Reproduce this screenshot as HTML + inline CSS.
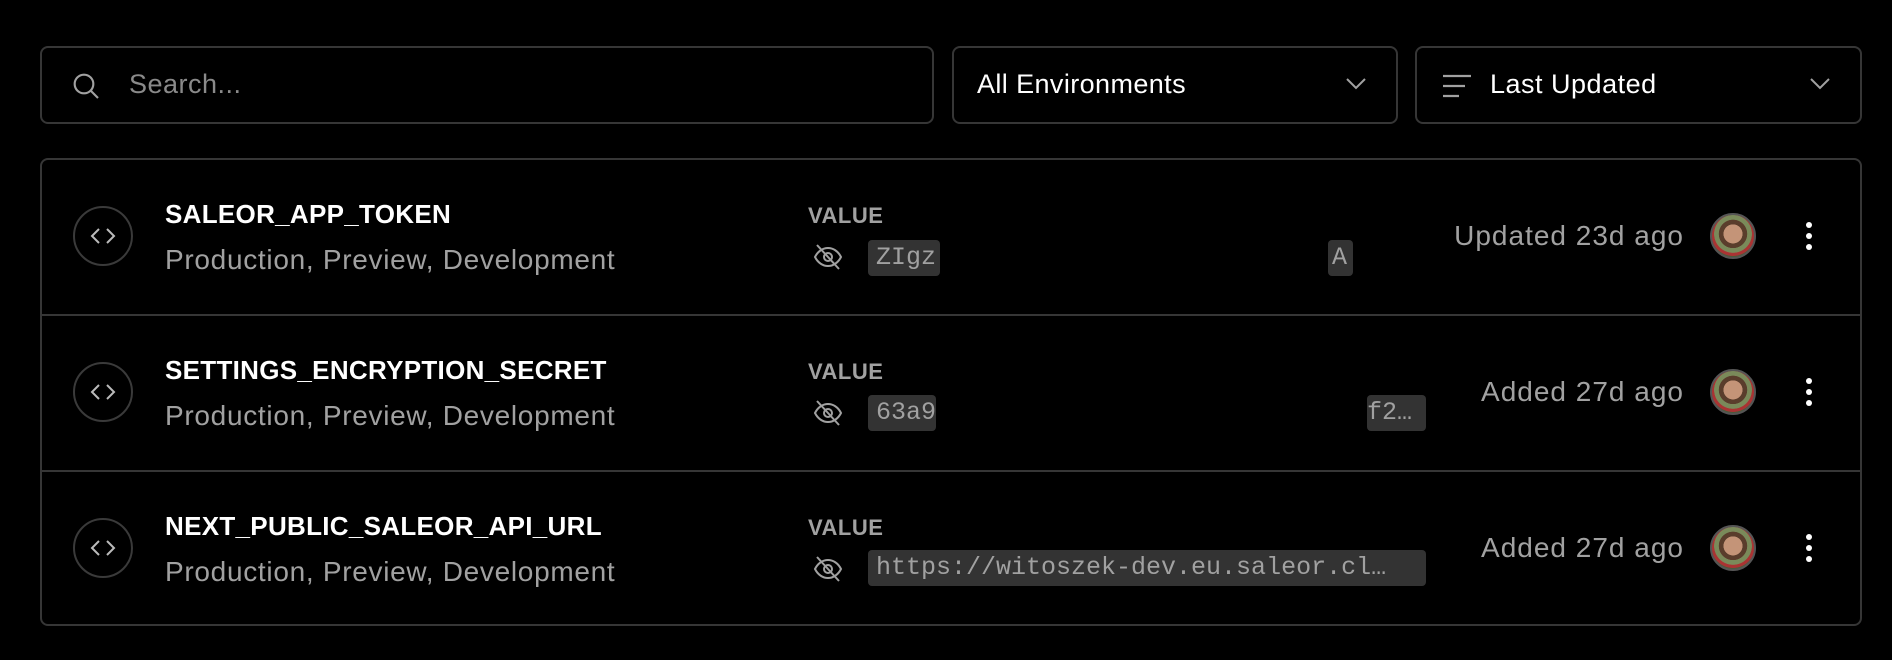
<!DOCTYPE html>
<html><head><meta charset="utf-8"><style>
*{box-sizing:border-box;margin:0;padding:0}
body{width:1892px;height:660px;background:#000;font-family:"Liberation Sans",sans-serif;position:relative;overflow:hidden;color:#ededed}
.box{position:absolute;border:2px solid #363636;border-radius:8px}
.abs{position:absolute}
.t{position:absolute;white-space:nowrap}
.name{font-size:26px;font-weight:bold;color:#fff;left:165px;letter-spacing:0.3px}
.sub{font-size:28px;color:#a1a1a1;left:165px;letter-spacing:0.7px}
.lbl{font-size:22px;font-weight:bold;color:#a1a1a1;left:808px;letter-spacing:0.5px}
.chip{position:absolute;background:#333;border-radius:4px;height:36px;font-family:"Liberation Mono",monospace;font-size:25px;color:#a1a1a1;line-height:36px;padding:0 8px;white-space:nowrap;overflow:hidden}
.right{font-size:28px;color:#a1a1a1;right:208px;letter-spacing:1px}
.av{position:absolute;width:46px;height:46px;border-radius:50%;left:1710px;border:2px solid #555;background:radial-gradient(circle at 50% 45%,#c49478 0 30%,#5a3d2c 31% 45%,#7a8a5a 46% 60%,#a33 61% 70%,#4a5a3a 71%)}
.dots{position:absolute;left:1806px;width:6px}
.dots i{display:block;width:6px;height:6px;border-radius:50%;background:#fff;margin-bottom:5px}
.hr{position:absolute;left:40px;width:1822px;height:2px;background:#363636}
</style></head><body>
<div class="box" style="left:40px;top:46px;width:894px;height:78px"></div>
<svg class="abs" style="left:70px;top:70px" width="32" height="32" viewBox="0 0 24 24" fill="none" stroke="#a1a1a1" stroke-width="1.6"><circle cx="10.5" cy="10.5" r="7"/><path d="M15.5 15.5L21 21"/></svg>
<div class="t" style="left:129px;top:69px;font-size:27px;color:#8a8a8a;letter-spacing:0.5px">Search...</div>

<div class="box" style="left:952px;top:46px;width:446px;height:78px"></div>
<div class="t" style="left:977px;top:69px;font-size:27px;color:#fff;letter-spacing:0.4px">All Environments</div>
<svg class="abs" style="left:1345px;top:76px" width="22" height="14" viewBox="0 0 22 14" fill="none" stroke="#a1a1a1" stroke-width="2"><path d="M2 3l9 9 9-9"/></svg>

<div class="box" style="left:1415px;top:46px;width:447px;height:78px"></div>
<svg class="abs" style="left:1441px;top:73px" width="32" height="26" viewBox="0 0 32 26" fill="none" stroke="#a1a1a1" stroke-width="2.2"><path d="M2 3h28M2 13h22M2 23h16"/></svg>
<div class="t" style="left:1490px;top:69px;font-size:27px;color:#fff;letter-spacing:0.5px">Last Updated</div>
<svg class="abs" style="left:1809px;top:76px" width="22" height="14" viewBox="0 0 22 14" fill="none" stroke="#a1a1a1" stroke-width="2"><path d="M2 3l9 9 9-9"/></svg>

<div class="box" style="left:40px;top:158px;width:1822px;height:468px"></div>
<div class="hr" style="top:314px"></div>
<div class="hr" style="top:470px"></div>

<svg width="0" height="0" style="position:absolute"><defs>
<g id="code"><circle cx="30" cy="30" r="29" fill="none" stroke="#3a3a3a" stroke-width="2"/><path d="M26 23l-7 7 7 7M34 23l7 7-7 7" fill="none" stroke="#bbb" stroke-width="2"/></g>
<g id="eye" fill="none" stroke="#a1a1a1" stroke-width="2"><path d="M3 16c3-6 8-9 13-9s10 3 13 9c-3 6-8 9-13 9s-10-3-13-9z"/><circle cx="16" cy="16" r="4"/><path d="M5 4l22 24"/></g>
</defs></svg>

<!-- row1 -->
<svg class="abs" style="left:73px;top:206px" width="62" height="62"><use href="#code"/></svg>
<div class="t name" style="top:199px">SALEOR_APP_TOKEN</div>
<div class="t sub" style="top:244px">Production, Preview, Development</div>
<div class="t lbl" style="top:203px">VALUE</div>
<svg class="abs" style="left:812px;top:241px" width="32" height="32"><use href="#eye"/></svg>
<div class="chip" style="left:868px;top:240px;width:72px">ZIgz</div>
<div class="chip" style="left:1328px;top:240px;width:25px;padding:0 4px">A</div>
<div class="t right" style="top:220px">Updated 23d ago</div>
<div class="av" style="top:213px"></div>
<div class="dots" style="top:222px"><i></i><i></i><i></i></div>

<!-- row2 -->
<svg class="abs" style="left:73px;top:362px" width="62" height="62"><use href="#code"/></svg>
<div class="t name" style="top:355px">SETTINGS_ENCRYPTION_SECRET</div>
<div class="t sub" style="top:400px">Production, Preview, Development</div>
<div class="t lbl" style="top:359px">VALUE</div>
<svg class="abs" style="left:812px;top:397px" width="32" height="32"><use href="#eye"/></svg>
<div class="chip" style="left:868px;top:395px;width:68px">63a9</div>
<div class="chip" style="left:1367px;top:395px;width:59px;padding:0">f2…</div>
<div class="t right" style="top:376px">Added 27d ago</div>
<div class="av" style="top:369px"></div>
<div class="dots" style="top:378px"><i></i><i></i><i></i></div>

<!-- row3 -->
<svg class="abs" style="left:73px;top:518px" width="62" height="62"><use href="#code"/></svg>
<div class="t name" style="top:511px">NEXT_PUBLIC_SALEOR_API_URL</div>
<div class="t sub" style="top:556px">Production, Preview, Development</div>
<div class="t lbl" style="top:515px">VALUE</div>
<svg class="abs" style="left:812px;top:553px" width="32" height="32"><use href="#eye"/></svg>
<div class="chip" style="left:868px;top:550px;width:558px">https://witoszek-dev.eu.saleor.cl…</div>
<div class="t right" style="top:532px">Added 27d ago</div>
<div class="av" style="top:525px"></div>
<div class="dots" style="top:534px"><i></i><i></i><i></i></div>
</body></html>
